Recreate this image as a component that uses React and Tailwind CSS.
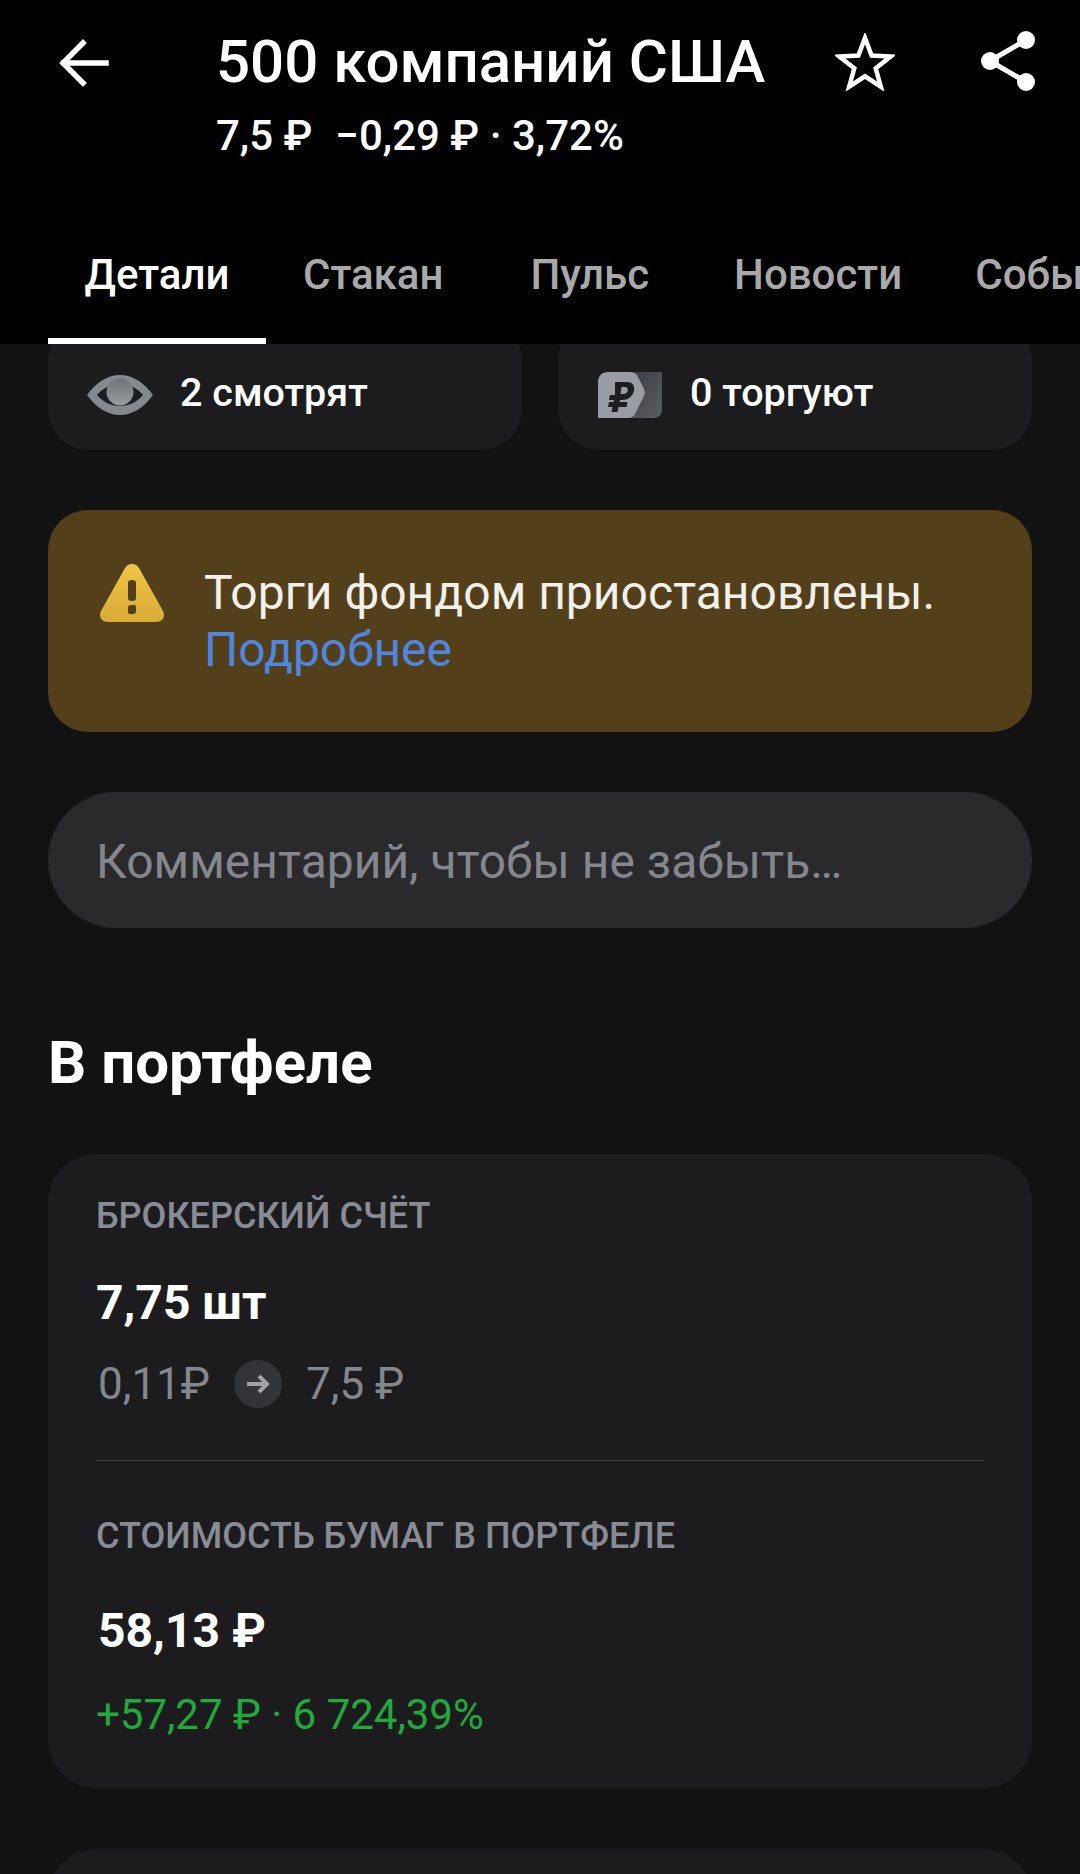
import React from 'react';

const ArrowBackIcon = () => (
    <svg width="52" height="52" viewBox="0 0 52 52" fill="none" stroke="#fff" strokeWidth="5.5" strokeLinecap="square">
        <path d="M48 26H6" />
        <path d="M25 6L5 26l20 20" />
    </svg>
);

const StarIcon = () => (
    <svg width="60" height="58" viewBox="0 0 60 58" fill="none" stroke="#fff" strokeWidth="4.5" strokeLinejoin="miter">
        <path d="M30 5l6.6 17.6 19 .9-14.9 11.8 5.1 18.4L30 43.300l-15.800 10.400 5.100-18.400L4.400 23.500l19-.9z" />
    </svg>
);

const ShareIcon = () => (
    <svg width="54" height="60" viewBox="0 0 54 60" fill="#fff">
        <circle cx="45" cy="9" r="9" />
        <circle cx="9" cy="30" r="9" />
        <circle cx="45" cy="51" r="9" />
        <path d="M9 30L45 9M9 30l36 21" stroke="#fff" strokeWidth="5" fill="none" />
    </svg>
);

const EyeIcon = () => (
    <svg width="66" height="40" viewBox="0 0 66 40">
        <defs>
            <linearGradient id="eyeFill" x1="0" y1="0" x2="0" y2="1">
                <stop offset="0" stopColor="#6f7277" />
                <stop offset="1" stopColor="#999ca1" />
            </linearGradient>
        </defs>
        <path d="M0 20C9 7 21 0 33 0s24 7 33 20C57 33 45 40 33 40S9 33 0 20z" fill="#85888d" />
        <path d="M10 20c6-7 14-11 23-11s17 4 23 11c-6 7-14 11-23 11s-17-4-23-11z" fill="#1a1c22" />
        <circle cx="33" cy="17" r="13.500" fill="url(#eyeFill)" />
    </svg>
);

const TradersIcon = () => (
    <svg width="64" height="46" viewBox="0 0 64 46">
        <defs>
            <linearGradient id="tradeBack" x1="0" y1="0" x2="1" y2="1">
                <stop offset="0" stopColor="#3a3c41" />
                <stop offset="1" stopColor="#5c5e64" />
            </linearGradient>
        </defs>
        <path d="M30 0h34v38a8 8 0 0 1-8 8H30z" fill="url(#tradeBack)" />
        <path d="M10 0h22c3 0 5 1 7 3l7 14c1 3 1 5 0 7l-9 18c-2 3-4 4-7 4H0V10C0 4 4 0 10 0z" fill="#9a9ca4" />
        <path d="M17 10h12c5 0 8 3 7 8.500S30 28 25 28h-3l-.5 2h8l-1 5h-8l-1 5h-6l1-5H10l1-5h4.500l.5-2h-5l1-5h5zm6.500 5l-1 7h3c2.500 0 4-1.500 4.300-3.500s-.8-3.500-3-3.500z" fill="#1c1e22" />
    </svg>
);

const WarningIcon = () => (
    <svg width="66" height="58" viewBox="0 0 66 58">
        <defs>
            <linearGradient id="warnFill" x1="0" y1="0" x2="0" y2="1">
                <stop offset="0" stopColor="#eec545" />
                <stop offset="1" stopColor="#d9ab37" />
            </linearGradient>
        </defs>
        <path d="M26 4c3.500-5.500 10.500-5.500 14 0l24 43c3 6-1 11-7 11H9c-6 0-10-5-7-11z" fill="url(#warnFill)" />
        <path d="M29 19c0-2 1-3 4-3s4 1 4 3v15c0 2-1 3-4 3s-4-1-4-3z" fill="#53401a" />
        <path d="M29 44c0-2 1-3 3-3h3c2 0 2 1 2 3v3c0 2-1 3-3 3h-3c-2 0-2-1-2-3z" fill="#53401a" />
    </svg>
);

const Tab = ({ label, active, className }) => (
    <div className={`relative flex h-[94px] shrink-0 items-start justify-center text-[42px] leading-[50px] font-medium ${active ? 'text-white' : 'text-[#a9a9a9]'} ${className}`}>
        {label}
        {active && <div className="absolute bottom-0 left-0 h-[6px] w-full bg-white" />}
    </div>
);

const StatPill = ({ icon, label, iconClass }) => (
    <div className="flex h-[130px] w-[474px] items-center rounded-[40px] bg-[#1c1c1f] pt-[16px] text-[39.500px] font-medium text-white">
        <div className={`flex justify-center pt-[4px] ${iconClass}`}>{icon}</div>
        {label}
    </div>
);

export default function App() {
    return (
        <div className="h-[1874px] w-[1080px] overflow-hidden bg-[#121212] font-['Roboto',sans-serif]">
            <header className="relative z-10 h-[344px] bg-black text-white">
                <div className="flex h-[250px] items-start">
                    <div className="mt-[37px] ml-[58px] w-[160px] shrink-0"><ArrowBackIcon /></div>
                    <div className="w-[617px] shrink-0 pt-[24px]">
                        <div className="-ml-[2px] text-[60px] leading-[76px] font-medium whitespace-nowrap">500 компаний США</div>
                        <div className="mt-[12px] -ml-[2px] text-[42px] leading-[48px] font-medium whitespace-pre">
                            7,5 ₽  <span className="ml-[2px]">−0,29 ₽ · 3,72%</span>
                        </div>
                    </div>
                    <div className="mt-[33px] shrink-0"><StarIcon /></div>
                    <div className="mt-[31px] ml-[86px] shrink-0"><ShareIcon /></div>
                </div>
                <div className="flex overflow-hidden pl-[48px]">
                    <Tab label="Детали" active className="w-[218px]" />
                    <Tab label="Стакан" className="ml-[37px]" />
                    <Tab label="Пульс" className="ml-[87px]" />
                    <Tab label="Новости" className="ml-[85px]" />
                    <Tab label="События" className="ml-[73px]" />
                </div>
            </header>

            <main className="px-[48px]">
                <div className="-mt-[24px] flex gap-[36px]">
                    <StatPill icon={<EyeIcon />} label="2 смотрят" iconClass="ml-[39px] mr-[27px]" />
                    <StatPill icon={<TradersIcon />} label="0 торгуют" iconClass="ml-[40px] mr-[28px]" />
                </div>

                <div className="mt-[60px] flex h-[222px] rounded-[40px] bg-[#53401a] pt-[54px] pl-[51px]">
                    <div className="mr-[39px] shrink-0"><WarningIcon /></div>
                    <div className="text-[48px] leading-[57px] text-[#f2f0ea]">
                        <div>Торги фондом приостановлены.</div>
                        <div className="text-[#4f86e0]">Подробнее</div>
                    </div>
                </div>

                <div className="mt-[60px] flex h-[136px] items-center rounded-[68px] bg-[#2a2a2d] pt-[4px] pl-[48px] text-[48px] text-[#85878d]">
                    Комментарий, чтобы не забыть…
                </div>

                <h2 className="mt-[102px] text-[60px] leading-[66px] font-bold text-white">В портфеле</h2>

                <section className="mt-[58px] h-[634px] rounded-[48px] bg-[#1c1c1f] px-[48px] pt-[40px]">
                    <div className="text-[36px] leading-[44px] font-medium text-[#8a8c94]">БРОКЕРСКИЙ СЧЁТ</div>
                    <div className="mt-[38px] text-[48px] leading-[54px] font-bold text-white">7,75 шт</div>
                    <div className="mt-[30px] flex h-[48px] items-center text-[44px] text-[#85878d]">
                        <span className="ml-[2px]">0,11₽</span>
                        <div className="mr-[24px] ml-[24px] flex size-[48px] items-center justify-center rounded-full bg-[#333437]">
                            <svg width="26" height="22" viewBox="0 0 26 22" fill="none" stroke="#a1a3aa" strokeWidth="4">
                                <path d="M2 11h20M14 3l8 8-8 8" />
                            </svg>
                        </div>
                        <span>7,5 ₽</span>
                    </div>
                    <div className="mt-[52px] h-[1px] bg-[#37383b]" />
                    <div className="mt-[53px] text-[36px] leading-[44px] font-medium text-[#8a8c94]">СТОИМОСТЬ БУМАГ В ПОРТФЕЛЕ</div>
                    <div className="mt-[45px] ml-[2px] text-[48px] leading-[56px] font-bold text-white">58,13 ₽</div>
                    <div className="mt-[31px] text-[42px] leading-[50px] text-[#1faa3c]">+57,27 ₽ · 6 724,39%</div>
                </section>

                <section className="mt-[61px] h-[120px] rounded-[48px] bg-[#1c1c1f]" />
            </main>
        </div>
    );
}
